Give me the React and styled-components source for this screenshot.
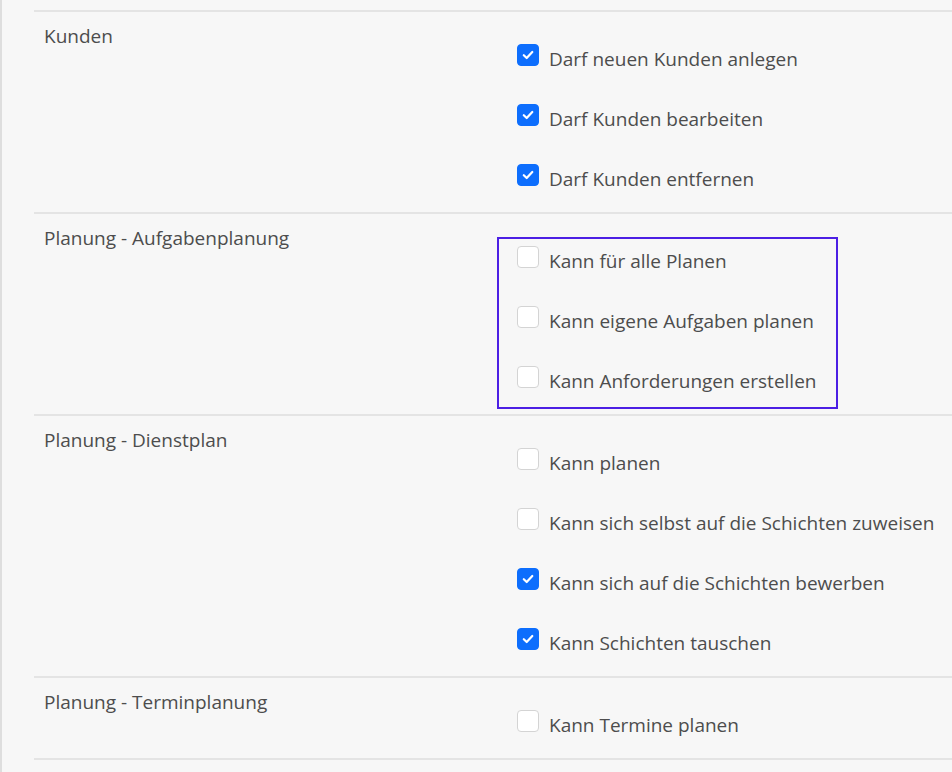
import React from 'react';
import styled, { createGlobalStyle } from 'styled-components';

const GlobalStyle = createGlobalStyle`
  html, body {
    margin: 0;
    padding: 0;
    background: #f7f7f7;
  }
  body {
    font-family: 'Open Sans', 'Noto Sans', sans-serif;
    color: #4d4d4d;
  }
`;

const Page = styled.div`
  min-height: 772px;
  box-sizing: border-box;
  border-left: 2px solid #dedede;
  padding: 10px 0 0 32px;
  overflow: hidden;
`;

const PermissionList = styled.div`
  border-bottom: 2px solid #e4e4e4;
`;

const Section = styled.section`
  display: grid;
  grid-template-columns: 473px 1fr;
  border-top: 2px solid #e4e4e4;
  padding-left: 10px;
`;

const SectionTitle = styled.div`
  padding-top: 11px;
  font-size: 19px;
  line-height: 27px;
`;

const OptionGroup = styled.div`
  position: relative;
  padding: 17px 0 3px;

  ${({ $highlight }) =>
    $highlight &&
    `
    &::before {
      content: '';
      position: absolute;
      top: 23px;
      left: -20px;
      width: 341px;
      height: 172px;
      box-sizing: border-box;
      border: 2px solid #4c1fe4;
      pointer-events: none;
    }
  `}
`;

const Option = styled.label`
  display: flex;
  align-items: center;
  height: 60px;
  gap: 10px;
  font-size: 19px;
  line-height: 27px;
  white-space: nowrap;
`;

const Box = styled.span`
  flex: none;
  display: flex;
  align-items: center;
  justify-content: center;
  width: 22px;
  height: 22px;
  box-sizing: border-box;
  margin-bottom: 9px;
  border-radius: 4px;
  border: 1px solid ${({ $checked }) => ($checked ? '#0d6efd' : '#d4d4d4')};
  background: ${({ $checked }) => ($checked ? '#0d6efd' : '#ffffff')};
`;

const Checkbox = ({ checked }) => (
  <Box $checked={checked}>
    {checked && (
      <svg width="12" height="10" viewBox="0 0 12 10">
        <path d="M1.8 5.2l2.9 2.8 5.6-6" fill="none" stroke="#fff" strokeWidth="2.2" strokeLinecap="round" strokeLinejoin="round" />
      </svg>
    )}
  </Box>
);

const sections = [
  {
    title: 'Kunden',
    options: [
      ['Darf neuen Kunden anlegen', true],
      ['Darf Kunden bearbeiten', true],
      ['Darf Kunden entfernen', true],
    ],
  },
  {
    title: 'Planung - Aufgabenplanung',
    highlight: true,
    options: [
      ['Kann für alle Planen', false],
      ['Kann eigene Aufgaben planen', false],
      ['Kann Anforderungen erstellen', false],
    ],
  },
  {
    title: 'Planung - Dienstplan',
    options: [
      ['Kann planen', false],
      ['Kann sich selbst auf die Schichten zuweisen', false],
      ['Kann sich auf die Schichten bewerben', true],
      ['Kann Schichten tauschen', true],
    ],
  },
  {
    title: 'Planung - Terminplanung',
    options: [['Kann Termine planen', false]],
  },
];

const App = () => (
  <>
    <GlobalStyle />
    <Page>
      <PermissionList>
        {sections.map((s) => (
          <Section key={s.title}>
            <SectionTitle>{s.title}</SectionTitle>
            <OptionGroup $highlight={s.highlight}>
              {s.options.map(([text, checked]) => (
                <Option key={text}>
                  <Checkbox checked={checked} />
                  {text}
                </Option>
              ))}
            </OptionGroup>
          </Section>
        ))}
      </PermissionList>
    </Page>
  </>
);

export default App;
